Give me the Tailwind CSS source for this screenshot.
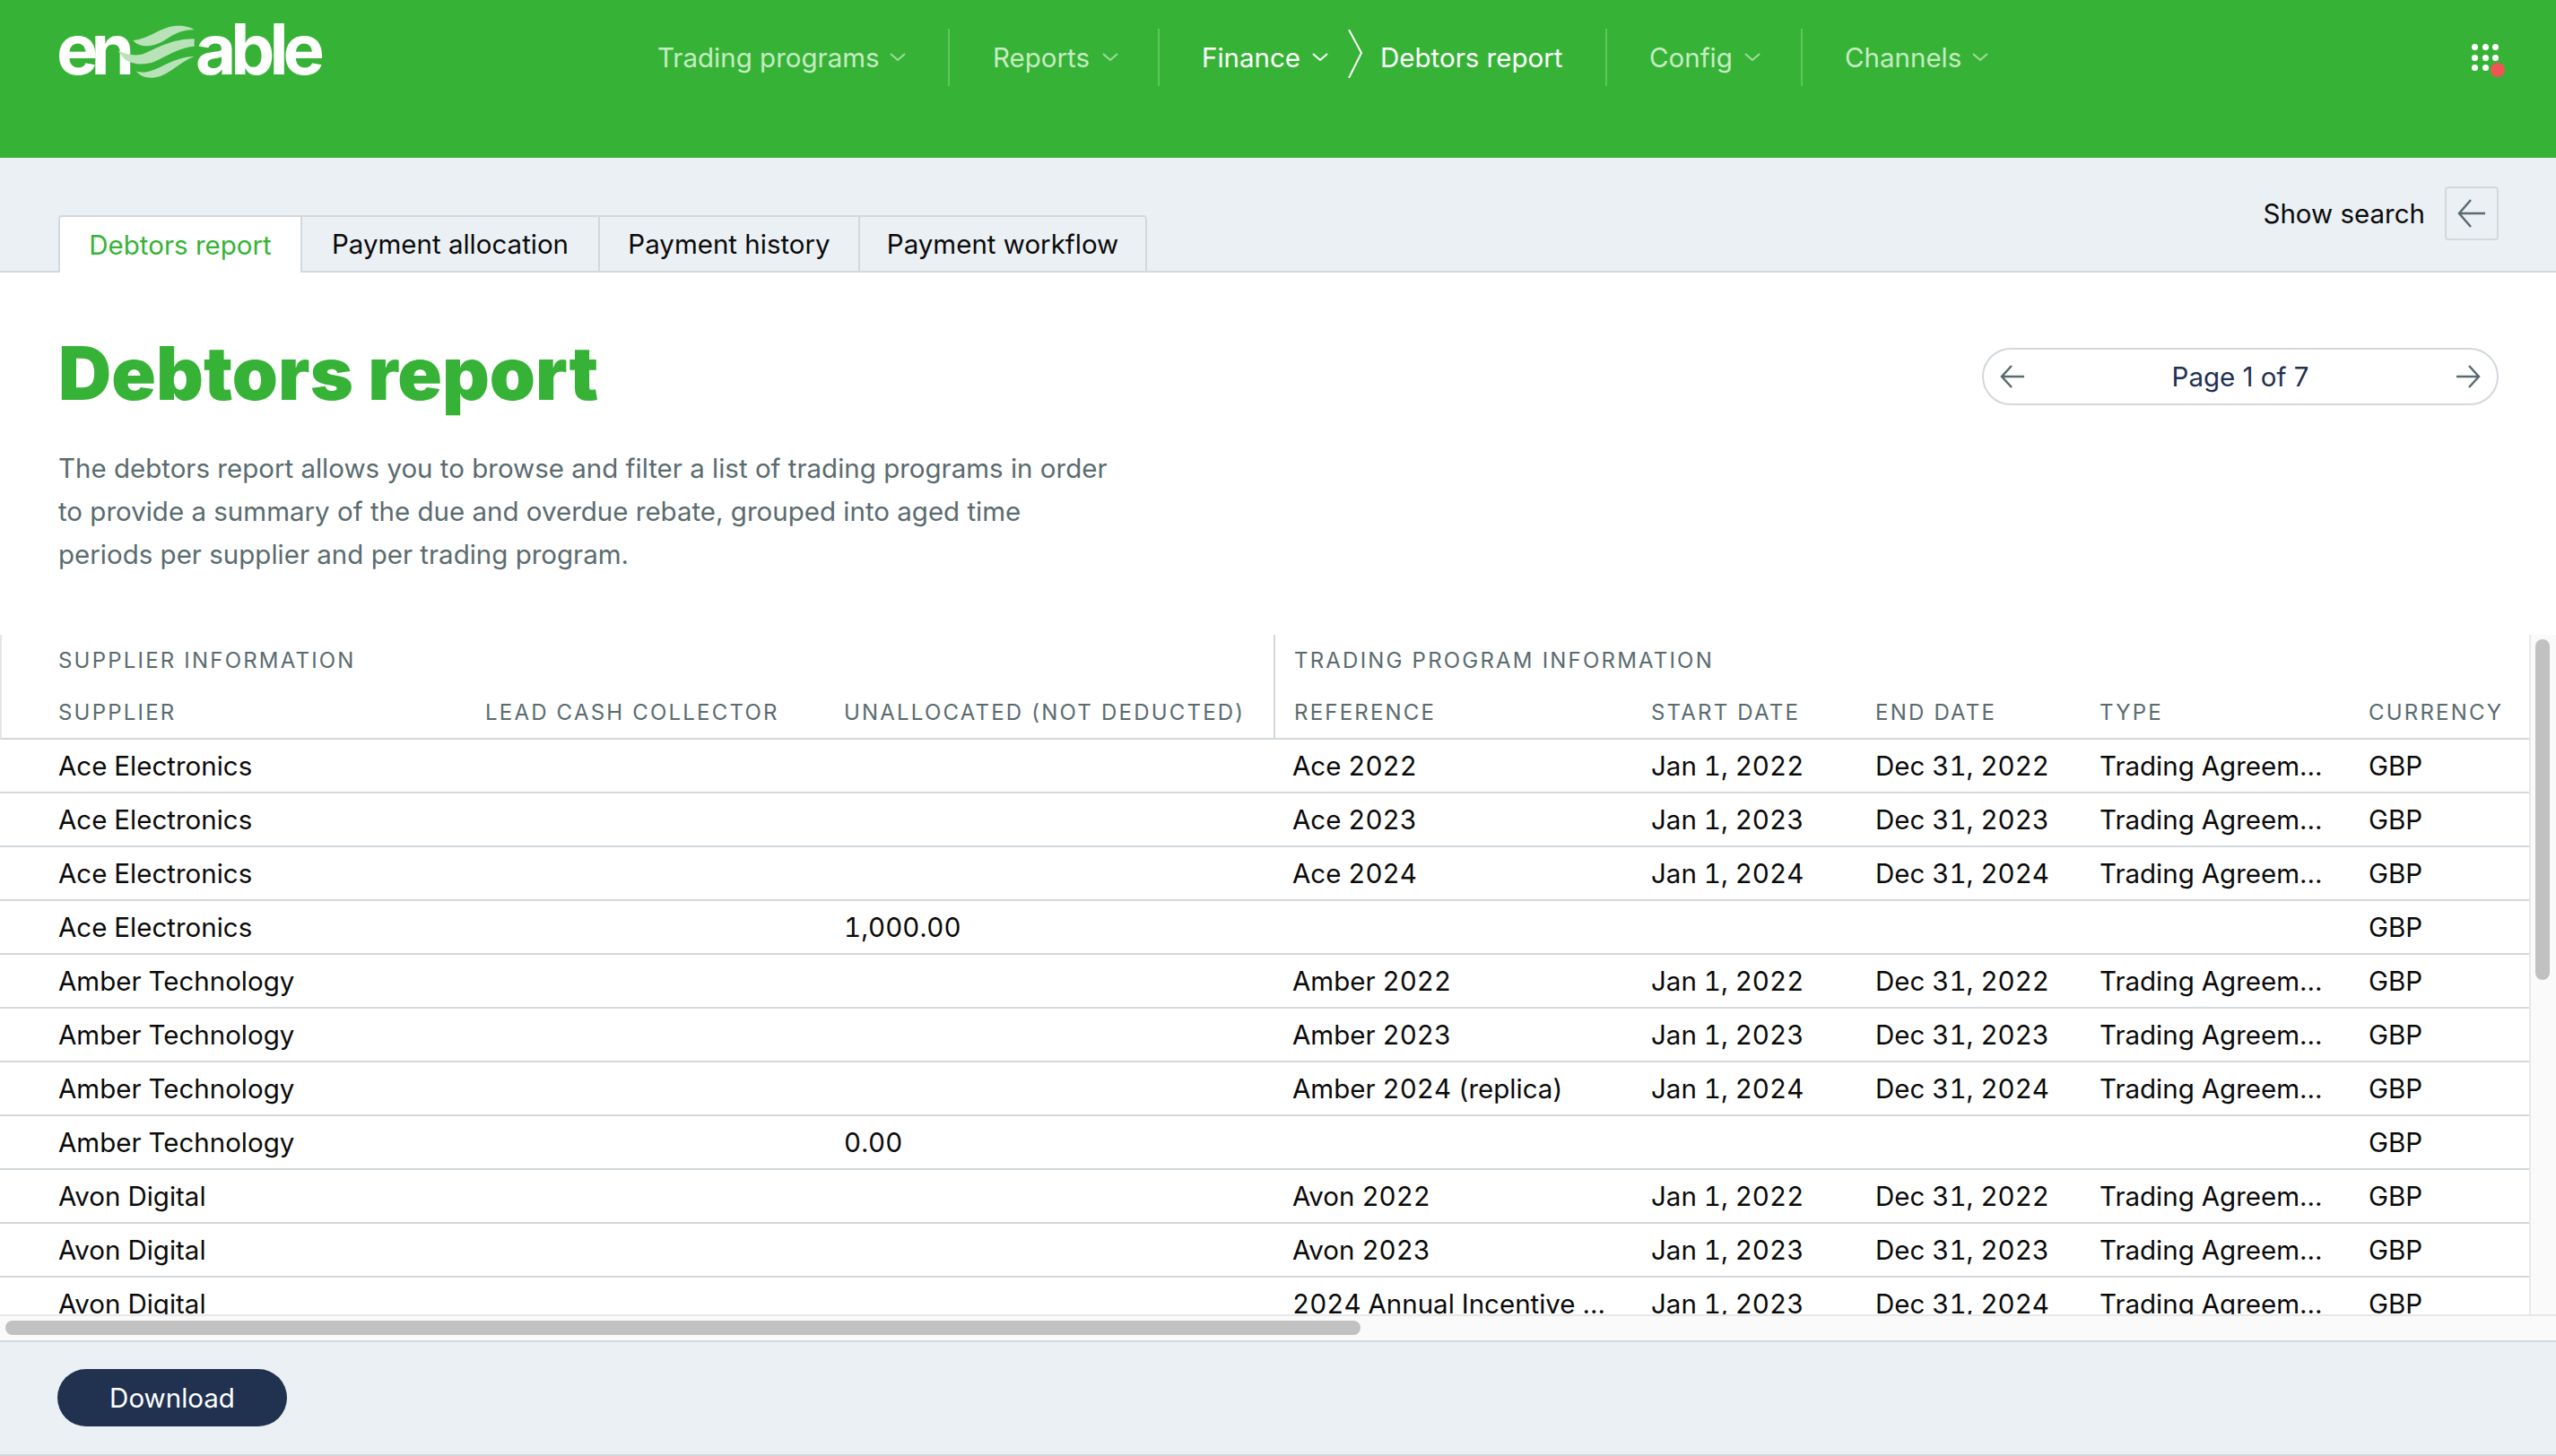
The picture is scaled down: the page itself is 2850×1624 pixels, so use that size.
<!DOCTYPE html>
<html lang="en">
<head>
    <meta charset="UTF-8">
    <title>Debtors report</title>
    <script src="https://cdn.jsdelivr.net/npm/@tailwindcss/browser@4"></script>
</head>
<body class="font-['Inter',sans-serif] text-[29.5px] text-[#0a0a0a] bg-white overflow-hidden">
    <div class="h-screen flex flex-col">

        <!-- top nav -->
        <header class="h-[176px] shrink-0 bg-[#36b336] flex items-start pl-[65px] pr-[65px]">
            <div class="w-[296px] h-[58px] mt-[28px] flex items-end relative text-white font-bold text-[78px] leading-[58px]">
                <span class="tracking-[-8px] w-[155px] -ml-[2px] pb-[2px]">en</span>
                <span class="tracking-[-6px] pb-[2px]">able</span>
                <svg class="absolute left-[-25px] top-[-18px]" width="340" height="100" viewBox="0 0 1020 300" fill="#b9e2b9">
                    <path d="M325 105C370 100 400 75 440 62C470 52 510 55 530 70C490 68 460 85 430 105C400 125 350 135 325 105Z"/>
                    <path d="M275 140C300 150 330 160 360 150C400 135 450 100 530 100V125C490 127 450 150 420 165C380 190 330 190 300 170C290 160 282 150 275 140Z"/>
                    <path d="M335 208C365 220 395 205 425 190C460 172 495 160 530 158C490 175 470 195 445 210C410 235 360 240 335 208Z"/>
                </svg>
            </div>

            <nav class="flex mt-[32px] ml-[372px] h-[64px] text-[#c6ebc3]">
                <a class="w-[324px] flex items-center gap-[11px]">Trading programs
                    <svg width="18" height="10" viewBox="0 0 18 10" fill="none" stroke="#9fdc9c" stroke-width="2"><path d="M1 1l8 7 8-7"/></svg>
                </a>
                <a class="w-[234px] pl-[48px] flex items-center gap-[14px] border-l-2 border-[#5fc65c]">Reports
                    <svg width="18" height="10" viewBox="0 0 18 10" fill="none" stroke="#9fdc9c" stroke-width="2"><path d="M1 1l8 7 8-7"/></svg>
                </a>
                <div class="w-[499px] pl-[47px] flex items-center border-l-2 border-[#5fc65c] text-white">
                    <a class="flex items-center gap-[13px]">Finance
                        <svg width="18" height="10" viewBox="0 0 18 10" fill="none" stroke="#ffffff" stroke-width="2"><path d="M1 1l8 7 8-7"/></svg>
                    </a>
                    <svg class="ml-[22px] mr-[20px] -mt-[9px]" width="16" height="54" viewBox="0 0 16 54" fill="none" stroke="#ffffff" stroke-width="2"><path d="M1 0l14 26-14 28"/></svg>
                    <span>Debtors report</span>
                </div>
                <a class="w-[218px] pl-[47px] flex items-center gap-[13px] border-l-2 border-[#5fc65c]">Config
                    <svg width="18" height="10" viewBox="0 0 18 10" fill="none" stroke="#9fdc9c" stroke-width="2"><path d="M1 1l8 7 8-7"/></svg>
                </a>
                <a class="pl-[47px] flex items-center gap-[12px] border-l-2 border-[#5fc65c]">Channels
                    <svg width="18" height="10" viewBox="0 0 18 10" fill="none" stroke="#9fdc9c" stroke-width="2"><path d="M1 1l8 7 8-7"/></svg>
                </a>
            </nav>

            <div class="ml-auto mt-[49px] mr-[-1px] relative grid grid-cols-3 gap-x-[4.5px] gap-y-[4.5px] w-[30px]">
                <span class="w-[7px] h-[7px] rounded-full bg-white"></span>
                <span class="w-[7px] h-[7px] rounded-full bg-white"></span>
                <span class="w-[7px] h-[7px] rounded-full bg-white"></span>
                <span class="w-[7px] h-[7px] rounded-full bg-white"></span>
                <span class="w-[7px] h-[7px] rounded-full bg-white"></span>
                <span class="w-[7px] h-[7px] rounded-full bg-white"></span>
                <span class="w-[7px] h-[7px] rounded-full bg-white"></span>
                <span class="w-[7px] h-[7px] rounded-full bg-white"></span>
                <span class="absolute left-[21px] top-[21px] w-[16px] h-[16px] rounded-full bg-[#ef5555]"></span>
            </div>
        </header>

        <!-- tabs bar -->
        <div class="h-[128px] shrink-0 bg-[#ebf0f4] border-b-2 border-[#d3d8dc] flex justify-between pl-[65px] pr-[64px]">
            <div class="flex mt-[64px] h-[64px] border-t-2 border-[#d3d8dc] rounded-t-[4px] self-start">
                <div class="w-[270px] bg-white text-[#36b336] flex items-center justify-center border-l-2 border-[#d3d8dc] rounded-tl-[4px]">Debtors report</div>
                <div class="w-[332px] flex items-center justify-center border-l-2 border-[#d3d8dc] h-[60px]">Payment allocation</div>
                <div class="w-[290px] flex items-center justify-center border-l-2 border-[#d3d8dc] h-[60px]">Payment history</div>
                <div class="w-[322px] flex items-center justify-center border-x-2 border-[#d3d8dc] h-[60px] rounded-tr-[4px]">Payment workflow</div>
            </div>
            <div class="flex items-center gap-[22px] mt-[32px] self-start">
                <span>Show search</span>
                <button class="w-[60px] h-[60px] border-2 border-[#d3d8dc] rounded-[4px] flex items-center justify-center">
                    <svg width="32" height="32" viewBox="0 0 32 32" fill="none" stroke="#5a6b6f" stroke-width="2.5"><path d="M31 16H2M15 1L2 16l13 15"/></svg>
                </button>
            </div>
        </div>

        <!-- page title -->
        <div class="h-[404px] shrink-0 flex justify-between pl-[65px] pr-[64px]">
            <div class="pt-[71px]">
                <h1 class="text-[82px] leading-[84px] font-black text-[#36b336]">Debtors report</h1>
                <p class="mt-[39px] leading-[48px] text-[#5a6b6f]">The debtors report allows you to browse and filter a list of trading programs in order<br>to provide a summary of the due and overdue rebate, grouped into aged time<br>periods per supplier and per trading program.</p>
            </div>
            <div class="mt-[84px] w-[576px] h-[64px] border-2 border-[#d3d8dc] rounded-full flex items-center justify-between px-[18px] text-[#1f3150]">
                <svg width="28" height="26" viewBox="0 0 28 26" fill="none" stroke="#5a6b6f" stroke-width="2.5"><path d="M27 13H2M13 1L2 13l11 12"/></svg>
                <span>Page 1 of 7</span>
                <svg width="28" height="26" viewBox="0 0 28 26" fill="none" stroke="#5a6b6f" stroke-width="2.5"><path d="M1 13h25M15 1l11 12-11 12"/></svg>
            </div>
        </div>

        <!-- table with its scrollbars -->
        <div class="h-[758px] shrink-0 flex">
            <div class="w-[2820px] overflow-hidden">
                <table class="table-fixed w-[2820px] border-separate border-spacing-0 text-left">
                    <colgroup>
                        <col class="w-[520px]"><col class="w-[400px]"><col class="w-[500px]"><col class="w-[400px]">
                        <col class="w-[250px]"><col class="w-[250px]"><col class="w-[300px]"><col class="w-[200px]">
                    </colgroup>
                    <thead class="text-[24px] text-[#5a6b6f] tracking-[2.2px] [&_th]:font-normal [&_th]:px-[21px] [&_th]:whitespace-nowrap">
                        <tr class="h-[58px]">
                            <th colspan="3" class="!pl-[63px] border-l-2 border-[#e3e6e8]">SUPPLIER INFORMATION</th>
                            <th colspan="5" class="border-l-2 border-[#d3d8dc]">TRADING PROGRAM INFORMATION</th>
                        </tr>
                        <tr class="h-[59px] [&_th]:border-b-2 [&_th]:border-b-[#d3d8dc]">
                            <th class="!pl-[63px] border-l-2 border-[#e3e6e8]">SUPPLIER</th>
                            <th>LEAD CASH COLLECTOR</th>
                            <th>UNALLOCATED (NOT DEDUCTED)</th>
                            <th class="border-l-2 border-l-[#d3d8dc]">REFERENCE</th>
                            <th>START DATE</th>
                            <th>END DATE</th>
                            <th>TYPE</th>
                            <th>CURRENCY</th>
                        </tr>
                    </thead>
                    <tbody class="tabular-nums [&_td]:h-[60px] [&_td]:px-[21px] [&_td]:whitespace-nowrap [&_td]:border-b-2 [&_td]:border-[#d3d8dc] [&_td:first-child]:pl-[65px]">
                        <tr><td>Ace Electronics</td><td></td><td></td><td>Ace 2022</td><td>Jan 1, 2022</td><td>Dec 31, 2022</td><td>Trading Agreem…</td><td>GBP</td></tr>
                        <tr><td>Ace Electronics</td><td></td><td></td><td>Ace 2023</td><td>Jan 1, 2023</td><td>Dec 31, 2023</td><td>Trading Agreem…</td><td>GBP</td></tr>
                        <tr><td>Ace Electronics</td><td></td><td></td><td>Ace 2024</td><td>Jan 1, 2024</td><td>Dec 31, 2024</td><td>Trading Agreem…</td><td>GBP</td></tr>
                        <tr><td>Ace Electronics</td><td></td><td>1,000.00</td><td></td><td></td><td></td><td></td><td>GBP</td></tr>
                        <tr><td>Amber Technology</td><td></td><td></td><td>Amber 2022</td><td>Jan 1, 2022</td><td>Dec 31, 2022</td><td>Trading Agreem…</td><td>GBP</td></tr>
                        <tr><td>Amber Technology</td><td></td><td></td><td>Amber 2023</td><td>Jan 1, 2023</td><td>Dec 31, 2023</td><td>Trading Agreem…</td><td>GBP</td></tr>
                        <tr><td>Amber Technology</td><td></td><td></td><td>Amber 2024 (replica)</td><td>Jan 1, 2024</td><td>Dec 31, 2024</td><td>Trading Agreem…</td><td>GBP</td></tr>
                        <tr><td>Amber Technology</td><td></td><td>0.00</td><td></td><td></td><td></td><td></td><td>GBP</td></tr>
                        <tr><td>Avon Digital</td><td></td><td></td><td>Avon 2022</td><td>Jan 1, 2022</td><td>Dec 31, 2022</td><td>Trading Agreem…</td><td>GBP</td></tr>
                        <tr><td>Avon Digital</td><td></td><td></td><td>Avon 2023</td><td>Jan 1, 2023</td><td>Dec 31, 2023</td><td>Trading Agreem…</td><td>GBP</td></tr>
                        <tr><td>Avon Digital</td><td></td><td></td><td>2024 Annual Incentive …</td><td>Jan 1, 2023</td><td>Dec 31, 2024</td><td>Trading Agreem…</td><td>GBP</td></tr>
                    </tbody>
                </table>
            </div>
            <div class="w-[30px] bg-[#fafafa] border-l-2 border-[#e8e8e8] pl-[5px] pt-[5px]">
                <div class="w-[16px] h-[380px] rounded-full bg-[#c1c1c1]"></div>
            </div>
        </div>
        <div class="h-[29px] shrink-0 bg-[#fafafa] border-t-2 border-[#e8e8e8] pl-[6px] pt-[5px]">
            <div class="w-[1511px] h-[16px] rounded-full bg-[#c1c1c1]"></div>
        </div>

        <!-- footer -->
        <div class="flex-1 bg-[#ebf0f4] border-y-2 border-[#d3d8dc] pl-[64px] pt-[30px]">
            <button class="w-[256px] h-[64px] rounded-full bg-[#203250] text-white">Download</button>
        </div>
    </div>
</body>
</html>
